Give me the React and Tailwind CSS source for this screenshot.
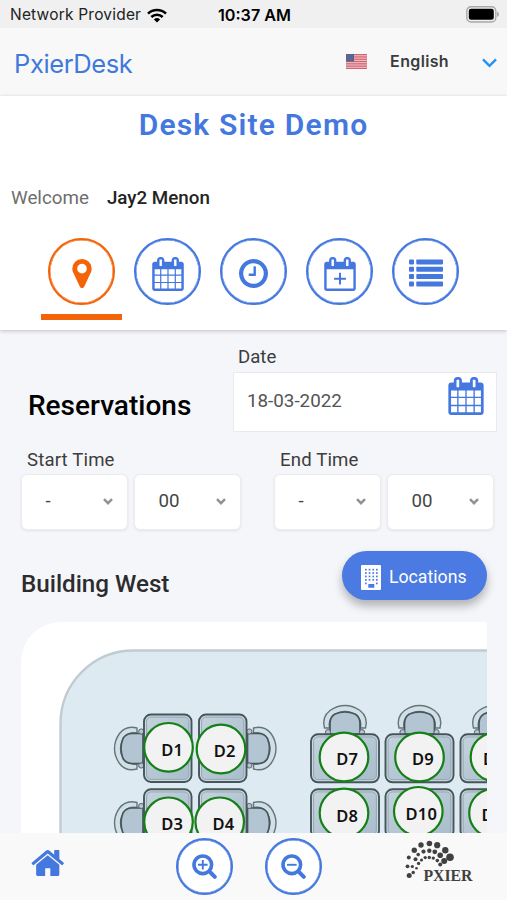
import React from "react";

const CAL_FRAME =
  "M512 448v-288q0-13-9.5-22.5t-22.5-9.5h-64q-13 0-22.5 9.5t-9.5 22.5v288q0 13 9.5 22.5t22.5 9.5h64q13 0 22.5-9.5t9.5-22.5zM1280 448v-288q0-13-9.5-22.5t-22.5-9.5h-64q-13 0-22.5 9.5t-9.5 22.5v288q0 13 9.5 22.5t22.5 9.5h64q13 0 22.5-9.5t9.5-22.5zM1664 384v1280q0 52-38 90t-90 38h-1408q-52 0-90-38t-38-90v-1280q0-52 38-90t90-38h128v-96q0-66 47-113t113-47h64q66 0 113 47t47 113v96h384v-96q0-66 47-113t113-47h64q66 0 113 47t47 113v96h128q52 0 90 38t38 90z";
const CAL_GRID =
  "M128 1664h288v-288h-288zM480 1664h320v-288h-320zM128 1312h288v-320h-288zM480 1312h320v-320h-320zM128 928h288v-288h-288zM864 1664h320v-288h-320zM480 928h320v-288h-320zM1248 1664h288v-288h-288zM864 1312h320v-320h-320zM1248 1312h288v-320h-288zM864 928h320v-288h-320zM1248 928h288v-288h-288z";

function CalendarIcon({ className }) {
  return (
    <svg viewBox="0 0 1664 1792" className={className} fill="currentColor" fillRule="evenodd">
      <path d={CAL_FRAME + CAL_GRID} />
    </svg>
  );
}

function CalendarPlusIcon() {
  return (
    <svg viewBox="0 0 1664 1792" className="mt-1 h-[34px] w-8" fill="currentColor" fillRule="evenodd">
      <path d={CAL_FRAME + "M128 1664h1408v-1024h-1408z"} />
      <path d="M780 830h104v260h260v104h-260v260h-104v-260h-260v-104h260z" />
    </svg>
  );
}

function PinIcon() {
  return (
    <svg viewBox="0 128 1024 1536" className="mt-1 h-[29px] w-5" fill="currentColor" fillRule="evenodd">
      <path d="M768 640q0-106-75-181t-181-75-181 75-75 181 75 181 181 75 181-75 75-181zM1024 640q0 109-33 179l-364 774q-16 33-47.5 52t-67.5 19-67.5-19-46.5-52l-365-774q-33-70-33-179 0-212 150-362t362-150 362 150 150 362z" />
    </svg>
  );
}

function ClockIcon() {
  return (
    <svg viewBox="0 128 1536 1536" className="mt-1 size-[29px]" fill="currentColor" fillRule="evenodd">
      <path d="M896 544v448q0 14-9 23t-23 9h-320q-14 0-23-9t-9-23v-64q0-14 9-23t23-9h224v-352q0-14 9-23t23-9h64q14 0 23 9t9 23zM1312 896q0-148-73-273t-198-198-273-73-273 73-198 198-73 273 73 273 198 198 273 73 273-73 198-198 73-273zM1536 896q0 209-103 385.5t-279.5 279.5-385.5 103-385.5-103-279.5-279.5-103-385.5 103-385.5 279.5-279.5 385.5-103 385.5 103 279.5 279.5 103 385.5z" />
    </svg>
  );
}

function ListIcon() {
  return (
    <svg viewBox="0 0 34 28" className="mt-0.5 h-7 w-[34px]" fill="currentColor">
      {[0.4, 7.8, 15.1, 22.5].map((y) => (
        <g key={y}>
          <rect x="0" y={y} width="5" height="5" rx="0.8" />
          <rect x="7.3" y={y} width="26.7" height="5" rx="0.8" />
        </g>
      ))}
    </svg>
  );
}

function HomeIcon() {
  return (
    <svg viewBox="0 256 1640 1280" className="h-[26px] w-[33px] text-[#4478df]" fill="currentColor">
      <path d="M1408 992v480q0 26-19 45t-45 19h-384v-384h-256v384h-384q-26 0-45-19t-19-45v-480q0-1 .5-3t.5-3l575-474 575 474q1 2 1 6zM1631 923l-62 74q-8 9-21 11h-3q-13 0-21-7l-692-577-692 577q-12 8-24 7-13-2-21-11l-62-74q-8-10-7-23.5t11-21.5l719-599q32-26 76-26t76 26l244 204v-195q0-14 9-23t23-9h192q14 0 23 9t9 23v408l219 182q10 8 11 21.5t-7 23.5z" />
    </svg>
  );
}

function ZoomButton({ plus }) {
  return (
    <button className="flex size-[57px] items-center justify-center rounded-full border-2 border-[#4478df] bg-white text-[#4478df] shadow-[inset_0_0_0_0.5px_#4478df]">
      <svg viewBox="0 0 25 25" className="size-[25px]" fill="none" stroke="currentColor">
        <circle cx="10.8" cy="10.8" r="8.8" strokeWidth="3.6" />
        <path d="M17.5 17.5l5.3 5.3" strokeWidth="4" strokeLinecap="round" />
        <path d={plus ? "M6 10.8h9.6M10.8 6v9.6" : "M6 10.8h9.6"} strokeWidth="1.9" />
      </svg>
    </button>
  );
}

function WifiIcon() {
  return (
    <svg viewBox="0 0 20 15" className="ml-[6px] h-[15px] w-5" fill="none" stroke="#000" strokeWidth="2.6">
      <path d="M1 5.6a13 13 0 0 1 18 0" />
      <path d="M4.3 9a8.3 8.3 0 0 1 11.4 0" />
      <path d="M10 14.6l-3.1-3.2a4.5 4.5 0 0 1 6.2 0z" fill="#000" stroke="none" />
    </svg>
  );
}

function BatteryIcon() {
  return (
    <svg viewBox="0 0 33 17" className="h-[17px] w-[33px]">
      <rect x="0.8" y="0.8" width="29" height="15.2" rx="4.3" fill="#f0f0f0" stroke="#a9a9a9" strokeWidth="1.4" />
      <rect x="2.8" y="2.8" width="25" height="11" rx="2.3" fill="#000" />
      <path d="M31 5.5q2 .5 2 2.8t-2 2.8z" fill="#a9a9a9" />
    </svg>
  );
}

function Flag() {
  return (
    <svg viewBox="0 0 21 15" className="h-[15px] w-[21px]">
      <rect width="21" height="15" fill="#edc6cb" />
      {[0, 1, 2, 3, 4, 5, 6].map((i) => (
        <rect key={i} y={i * 2.3} width="21" height="1.25" fill="#d6646f" />
      ))}
      <rect width="8" height="7.6" fill="#5b6190" />
      <path d="M1 1.8h6M1 3.8h6M1 5.8h6" stroke="#8287ad" strokeWidth=".5" strokeDasharray=".7 .8" />
    </svg>
  );
}

function BuildingIcon() {
  return (
    <svg viewBox="0 0 20 25" className="h-[25px] w-5">
      <rect width="20" height="25" rx="1" fill="#fff" />
      {[3.8, 7.2, 10.6, 14, 17.6].map((y, r) =>
        [4, 7.7, 11.4, 15].map((x, c) =>
          r === 4 && (c === 1 || c === 2) ? null : <rect key={x + "-" + y} x={x} y={y} width="1.7" height="1.7" fill="#4a7ae2" />
        )
      )}
      <rect x="7.3" y="19" width="6" height="3.8" rx=".5" fill="#4a7ae2" />
    </svg>
  );
}

const DOTS = [
  [409.2, 875.5, 2.5], [413.2, 872.5, 1.7], [416.5, 868.3, 1.3],
  [407.5, 866.3, 1.9], [412.3, 866.5, 1.6], [418.6, 863.4, 1.7],
  [408.8, 857.5, 2], [415.5, 859.2, 2], [421.5, 860, 1.6],
  [414.3, 850.2, 2.7], [418.2, 854.6, 1.8], [425.2, 857.6, 1.7],
  [421, 845, 2.7], [423.5, 851.6, 2.1], [429.3, 857.5, 1.7],
  [429.4, 843.5, 2.8], [429.3, 850.8, 2.2], [433.3, 858.1, 1.7],
  [437.2, 845.2, 3.1], [434.8, 851.8, 2.4], [437.3, 860.6, 1.8],
  [445.3, 850.3, 3.2], [440.2, 855.3, 2.8], [440.2, 864.5, 2],
  [450, 857.3, 3.8], [444.2, 861, 3],
];

function PxierLogo() {
  return (
    <svg viewBox="404 838 72 46" className="h-[46px] w-[72px]">
      {DOTS.map(([x, y, r]) => (
        <circle key={x + "-" + y} cx={x} cy={y} r={r} fill="#414141" />
      ))}
      <text x="423.5" y="880.5" textLength="49" lengthAdjust="spacingAndGlyphs" fontSize="16.5" fontWeight="700" fill="#414141" className="font-['Liberation_Serif',serif]">
        PXIER
      </text>
    </svg>
  );
}

function NavButton({ active, children }) {
  return (
    <button
      className={
        active
          ? "flex size-[67px] items-center justify-center rounded-full border-2 border-[#f36308] text-[#f36308] shadow-[inset_0_0_0_0.5px_#f36308]"
          : "flex size-[67px] items-center justify-center rounded-full border-2 border-[#4478df] text-[#4478df] shadow-[inset_0_0_0_0.5px_#4478df]"
      }
    >
      {children}
    </button>
  );
}

function TimeSelect({ value }) {
  return (
    <div className="flex h-14 w-[107px] items-center justify-between rounded-md border border-[#ececee] bg-white pr-[14px] pl-[23.5px] text-[18.7px] text-[#444] shadow-[0_1px_3px_rgba(0,0,0,0.08)]">
      <span className="pb-0.5">{value}</span>
      <svg viewBox="0 0 10 8" className="h-2 w-2.5" fill="none" stroke="#929292" strokeWidth="2.5">
        <path d="M1 1.2l4 4 4-4" />
      </svg>
    </div>
  );
}

function TimeField({ label }) {
  return (
    <div>
      <div className="pl-1.5 text-[18.6px] leading-6 tracking-[0.15px] text-[#3d3d3d]">{label}</div>
      <div className="mt-0.5 flex gap-1.5">
        <TimeSelect value="-" />
        <TimeSelect value="00" />
      </div>
    </div>
  );
}

// Seat drawn with its backrest on the left; other directions rotate it about the desk edge.
function Chair({ transform }) {
  return (
    <g transform={transform}>
      <path
        d="M-6-20.5Q-17-23.5-23.5-15Q-28.5-8-28.5 0T-23.5 15Q-17 23.5-6 20.5V15.5Q-14 17-18.5 11Q-22.5 6-22.5 0T-18.5-11Q-14-17-6-15.5Z"
        fill="#d1dfe7"
        stroke="#66757a"
        strokeWidth="1.4"
      />
      <path d="M-20-10Q-17-15-11-15H0V15H-11Q-17 15-20 10Q-24 0-20-10Z" fill="#b3c5d2" stroke="#46565b" strokeWidth="1.7" />
      <circle cx="-1.8" cy="-17" r="2.6" fill="#b3c5d2" stroke="#56666a" />
      <circle cx="-1.8" cy="17" r="2.6" fill="#b3c5d2" stroke="#56666a" />
    </g>
  );
}

const DESKS = [
  { x: 144, y: 714.5, w: 47.5, h: 67.5, cx: 168.5, cy: 747.3, t: "D1", tx: 161.2, ty: 756 },
  { x: 199, y: 714.5, w: 47.5, h: 67.5, cx: 221, cy: 749, t: "D2", tx: 213.8, ty: 757.3 },
  { x: 144, y: 789.3, w: 47.5, h: 67.5, cx: 168.5, cy: 821.8, t: "D3", tx: 161.2, ty: 830.2 },
  { x: 199, y: 789.3, w: 47.5, h: 67.5, cx: 219.7, cy: 821.8, t: "D4", tx: 212.6, ty: 830.2 },
  { x: 311, y: 734.3, w: 68, h: 48, cx: 344, cy: 757, t: "D7", tx: 336.3, ty: 765.3 },
  { x: 385.5, y: 734.3, w: 68, h: 48, cx: 419.5, cy: 757, t: "D9", tx: 412, ty: 765.3 },
  { x: 460.5, y: 734.3, w: 68, h: 48, cx: 495, cy: 757, t: "D11", tx: 483, ty: 765.3 },
  { x: 311, y: 789.3, w: 68, h: 48, cx: 344, cy: 813, t: "D8", tx: 336.3, ty: 821.8 },
  { x: 385.5, y: 789.3, w: 68, h: 48, cx: 418.3, cy: 811.3, t: "D10", tx: 405.5, ty: 819.5 },
  { x: 460.5, y: 789.3, w: 68, h: 48, cx: 493.5, cy: 813, t: "D12", tx: 481.5, ty: 820.5 },
];

function FloorPlan() {
  return (
    <svg viewBox="21 622 466 211" className="block h-[211px] w-[466px]">
      <defs>
        <linearGradient id="desk" x1="0" y1="0" x2="1" y2="1">
          <stop offset="0" stopColor="#c3d2dd" />
          <stop offset="1" stopColor="#a9bdcc" />
        </linearGradient>
      </defs>
      <path d="M60.5 840V724C60.5 683 93 650.5 134 650.5H500V840Z" fill="#deeaf2" stroke="#c1ccd2" strokeWidth="2.4" />
      <Chair transform="translate(143 748.5)" />
      <Chair transform="translate(143 823)" />
      <Chair transform="translate(247.5 748.5) scale(-1 1)" />
      <Chair transform="translate(247.5 823) scale(-1 1)" />
      <Chair transform="translate(345 734) rotate(90)" />
      <Chair transform="translate(419.5 734) rotate(90)" />
      <Chair transform="translate(494 734) rotate(90)" />
      {DESKS.map((d) => (
        <g key={d.t}>
          <rect x={d.x} y={d.y} width={d.w} height={d.h} rx="7" fill="#c9d8e1" stroke="#46555a" strokeWidth="1.9" />
          <rect x={d.x + 2.6} y={d.y + 2.6} width={d.w - 5.2} height={d.h - 5.2} rx="4.5" fill="url(#desk)" stroke="#899ba5" strokeWidth="0.8" />
        </g>
      ))}
      {DESKS.map((d) => (
        <g key={d.t}>
          <circle cx={d.cx} cy={d.cy} r="24.3" fill="#f2f2f2" stroke="#168018" strokeWidth="2.2" />
          <text x={d.tx} y={d.ty} fontSize="16.5" fontWeight="600" letterSpacing="0.2" fill="#111" className="font-['Noto_Sans',sans-serif]">
            {d.t}
          </text>
        </g>
      ))}
    </svg>
  );
}

export default function App() {
  return (
    <div className="flex h-[900px] w-[507px] flex-col overflow-hidden bg-[#f5f6fa] font-[Roboto,sans-serif]">
      <div className="grid h-7 shrink-0 grid-cols-[1fr_auto_1fr] items-center bg-[#f0f0f0] pr-[8px] pl-[10px] font-[Inter,sans-serif] text-[16px] text-black">
        <div className="flex items-center pt-0.5">
          <span className="text-[15.5px] tracking-[0.2px] whitespace-nowrap text-[#222]">Network Provider</span>
          <WifiIcon />
        </div>
        <div className="pt-0.5 text-[16.2px] font-semibold">10:37 AM</div>
        <div className="flex justify-end">
          <BatteryIcon />
        </div>
      </div>

      <header className="flex h-[68px] shrink-0 items-center bg-[#f8f8f8] pr-[10px] pl-[14px] font-[Inter,sans-serif]">
        <div className="pt-1 text-[25.5px] font-normal tracking-[-0.4px] text-[#4178dc]">PxierDesk</div>
        <div className="mb-0.5 ml-auto flex items-center">
          <Flag />
          <span className="ml-[23px] text-[16px] font-semibold tracking-[0.35px] text-[#3b3b3d]">English</span>
          <svg viewBox="0 0 15 10" className="mt-1 ml-[33px] h-2.5 w-[15px]" fill="none" stroke="#2493f5" strokeWidth="2.4">
            <path d="M1 1.3l6.5 6.6L14 1.3" />
          </svg>
        </div>
      </header>

      <section className="z-10 flex h-[234px] shrink-0 flex-col bg-white shadow-[0_1px_4px_rgba(0,0,0,0.22)]">
        <h1 className="mt-[11px] text-center text-[30px] leading-9 font-semibold tracking-[1.2px] text-[#4478df]">Desk Site Demo</h1>
        <div className="mt-[43px] flex gap-[18px] pl-[11px] text-[18.8px] leading-6">
          <span className="text-[#6e6e6e]">Welcome</span>
          <span className="font-medium text-[#222]">Jay2 Menon</span>
        </div>
        <nav className="mt-7 flex gap-[19px] pl-12">
          <NavButton active><PinIcon /></NavButton>
          <NavButton><CalendarIcon className="mt-1 h-[34px] w-8" /></NavButton>
          <NavButton><ClockIcon /></NavButton>
          <NavButton><CalendarPlusIcon /></NavButton>
          <NavButton><ListIcon /></NavButton>
        </nav>
        <div className="mt-[9px] ml-[41px] h-[6px] w-[81px] shrink-0 bg-[#f36308]" />
      </section>

      <main className="min-h-0 flex-1 overflow-hidden">
        <div className="flex h-[102px] items-end pl-7">
          <h2 className="mb-2 w-[205px] text-[28px] leading-9 font-medium text-black">Reservations</h2>
          <div>
            <div className="pl-[5px] text-[18.6px] leading-6 text-[#3d3d3d]">Date</div>
            <div className="mt-[3px] flex h-[60px] w-[264px] items-start justify-between border border-[#e9eaee] bg-white pr-3 pl-[13px]">
              <span className="mt-4 text-[18.8px] leading-6 text-[#555]">18-03-2022</span>
              <CalendarIcon className="mt-1 h-[38px] w-9 text-[#4478df]" />
            </div>
          </div>
        </div>
        <div className="mt-4 flex gap-[33px] pl-[21px]">
          <TimeField label="Start Time" />
          <TimeField label="End Time" />
        </div>
        <div className="mt-[21px] flex h-[49px] items-center justify-between pr-5 pl-[21px]">
          <h3 className="mt-[17px] text-[24.2px] leading-8 font-medium text-[#2c2c2e]">Building West</h3>
          <button className="flex h-[49px] w-[145px] items-center rounded-full bg-[#4a7ae2] pt-1 pl-[19px] text-white shadow-[0_6px_10px_rgba(0,0,0,0.28)]">
            <BuildingIcon />
            <span className="ml-2 text-[17.7px]">Locations</span>
          </button>
        </div>
        <div className="mt-[22px] ml-[21px] h-[211px] w-[466px] overflow-hidden rounded-tl-[40px] bg-white">
          <FloorPlan />
        </div>
      </main>

      <footer className="flex h-[67px] shrink-0 items-center bg-[#f9f9f9] pl-[31px]">
        <div className="mb-[7px]"><HomeIcon /></div>
        <div className="ml-28 flex gap-8">
          <ZoomButton plus />
          <ZoomButton />
        </div>
        <div className="mb-3 ml-[82px]"><PxierLogo /></div>
      </footer>
    </div>
  );
}
